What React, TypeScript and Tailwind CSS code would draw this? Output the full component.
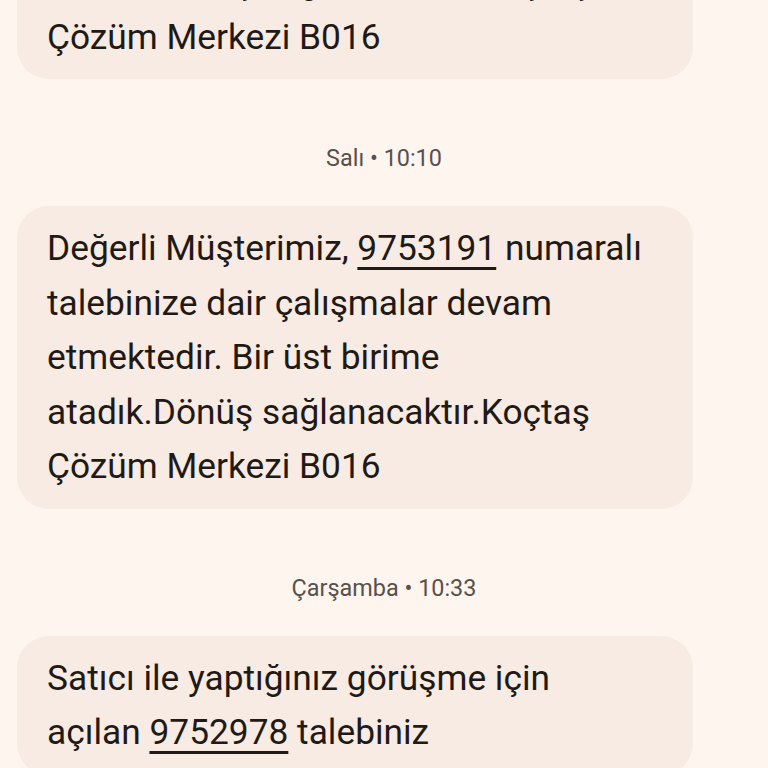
import React from "react";

const font = { fontFamily: "Roboto, 'Noto Sans', sans-serif" };

function Bubble({ children, className = "" }: { children: React.ReactNode; className?: string }) {
  return (
    <div
      className={`w-[676px] rounded-[32px] bg-[#f7ebe3] px-[30px] py-[15px] text-[35.3px] leading-[54.5px] text-[#1f1a16] ${className}`}
    >
      {children}
    </div>
  );
}

function Stamp({ children }: { children: React.ReactNode }) {
  return (
    <div className="flex justify-center pt-[64px] pb-[33px]">
      <span className="text-[23.4px] leading-[30px] text-[#57514c]">{children}</span>
    </div>
  );
}

function Num({ children }: { children: React.ReactNode }) {
  return (
    <span className="underline decoration-[3px] underline-offset-[7px]">{children}</span>
  );
}

export default function App() {
  return (
    <div className="h-[768px] w-[768px] overflow-hidden bg-[#fdf5ee]" style={font}>
      <div className="flex flex-col px-[17px]">
        <Bubble className="-mt-[60px]">
          <div>atadık.Dönüş sağlanacaktır.Koçtaş</div>
          <div>Çözüm Merkezi B016</div>
        </Bubble>
        <Stamp>Salı • 10:10</Stamp>
        <Bubble>
          <div>
            Değerli Müşterimiz, <Num>9753191</Num> numaralı
          </div>
          <div>talebinize dair çalışmalar devam</div>
          <div>etmektedir. Bir üst birime</div>
          <div>atadık.Dönüş sağlanacaktır.Koçtaş</div>
          <div>Çözüm Merkezi B016</div>
        </Bubble>
        <Stamp>Çarşamba • 10:33</Stamp>
        <Bubble>
          <div>Satıcı ile yaptığınız görüşme için</div>
          <div>
            açılan <Num>9752978</Num> talebiniz
          </div>
        </Bubble>
      </div>
    </div>
  );
}
